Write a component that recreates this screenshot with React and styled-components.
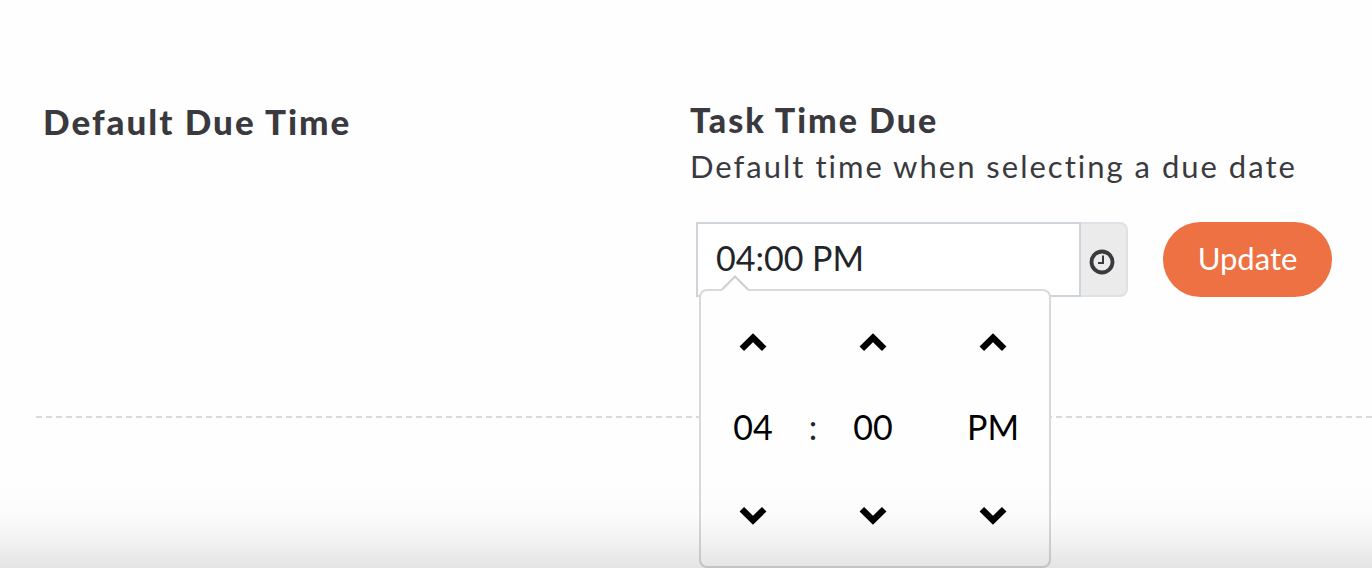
import React, { useState } from "react";
import styled, { createGlobalStyle } from "styled-components";

const GlobalStyle = createGlobalStyle`
  *, *::before, *::after { box-sizing: border-box; }
  body {
    margin: 0;
    background: #fefefe;
    color: #3a3a3e;
    font-family: Lato, "Open Sans", sans-serif;
  }
  button, input { font: inherit; }
`;

const Page = styled.main`
  min-height: 100vh;
  padding: 96px 0 0 36px;
`;

const Section = styled.section`
  display: grid;
  grid-template-columns: minmax(0, 1fr) minmax(0, 1fr);
  padding: 0 35px 121px 7px;
  background: repeating-linear-gradient(to right, #dadada 0 6px, transparent 6px 10px)
    left bottom / 100% 2px no-repeat;
`;

const SectionTitle = styled.h2`
  margin: 0;
  font-size: 35px;
  line-height: 50px;
  font-weight: 900;
  letter-spacing: 2px;
`;

const FieldLabel = styled.label`
  display: block;
  font-size: 34px;
  line-height: 48px;
  font-weight: 900;
  letter-spacing: 2px;
`;

const FieldHint = styled.p`
  margin: 0 0 34px;
  font-size: 31px;
  line-height: 44px;
  letter-spacing: 2px;
`;

const Controls = styled.div`
  display: flex;
  gap: 35px;
  padding: 0 5px 0 6px;
`;

const TimeField = styled.div`
  position: relative;
  display: flex;
  flex: 1;
  min-width: 0;
  height: 75px;
`;

const TimeInput = styled.input`
  flex: 1;
  min-width: 0;
  padding: 0 18px 4px;
  border: 2px solid #ced4da;
  border-radius: 0;
  background: #fff;
  color: #212529;
  font-size: 34px;
  outline: none;
`;

const ClockButton = styled.button`
  display: flex;
  align-items: center;
  justify-content: center;
  width: 47px;
  padding: 4px 4px 0 0;
  border: 2px solid #dee2e6;
  border-left: 0;
  border-radius: 0 8px 8px 0;
  background: #ebebeb;
  color: #3a3a3e;
`;

const UpdateButton = styled.button`
  width: 169px;
  height: 75px;
  padding: 0 0 4px;
  border: 0;
  border-radius: 38px;
  background: #ed7143;
  color: #fff;
  font-size: 31px;
`;

const Picker = styled.div`
  position: absolute;
  top: 67px;
  left: 3px;
  z-index: 1;
  display: grid;
  grid-template-columns: 104px 16px 104px 16px 104px;
  grid-auto-rows: 87px;
  align-items: center;
  justify-items: center;
  width: 352px;
  padding: 7px 0;
  border: 2px solid #d9d9d9;
  border-radius: 8px;
  background: #fefefe;

  &::before, &::after {
    content: "";
    position: absolute;
    border-style: solid;
    border-color: transparent;
    border-top: 0;
  }
  &::before {
    top: -16px;
    left: 20px;
    border-width: 0 14px 14px;
    border-bottom-color: #cfcfcf;
  }
  &::after {
    top: -13px;
    left: 21px;
    border-width: 0 13px 13px;
    border-bottom-color: #fefefe;
  }
`;

const StepButton = styled.button`
  display: flex;
  grid-column: ${(p) => p.$column};
  padding: 20px;
  border: 0;
  background: none;
  color: #000;
`;

const ValueButton = styled.button`
  grid-column: ${(p) => p.$column};
  padding: 0 0 4px;
  border: 0;
  background: none;
  color: #000;
  font-size: 34px;
`;

const Separator = styled.span`
  grid-column: 2;
  padding-bottom: 4px;
  color: #212529;
  font-size: 34px;
`;

const BottomFade = styled.div`
  position: fixed;
  right: 0;
  bottom: 0;
  left: 0;
  z-index: 2;
  height: 84px;
  background: linear-gradient(
    to bottom,
    rgba(0, 0, 0, 0),
    rgba(0, 0, 0, 0.01) 38%,
    rgba(0, 0, 0, 0.05) 70%,
    rgba(0, 0, 0, 0.1)
  );
  pointer-events: none;
`;

function Chevron({ down }) {
  return (
    <svg width="28" height="20" viewBox="0 0 28 20" fill="none" stroke="currentColor" strokeWidth="6.4" aria-hidden="true">
      <path d={down ? "M2.8 3.2 14 14.2 25.2 3.2" : "M2.8 16.8 14 5.8 25.2 16.8"} />
    </svg>
  );
}

function Clock() {
  return (
    <svg width="26" height="26" viewBox="0 0 26 26" fill="none" stroke="currentColor" aria-hidden="true">
      <circle cx="13" cy="13" r="10.5" strokeWidth="3.8" />
      <path d="M14 6.5V14H9" strokeWidth="2" />
    </svg>
  );
}

const pad = (n) => String(n).padStart(2, "0");

const units = [
  { name: "hour", column: 1 },
  { name: "minute", column: 3 },
  { name: "period", column: 5 },
];

export default function App() {
  const [minutes, setMinutes] = useState(16 * 60);
  const [open, setOpen] = useState(true);

  const hour24 = Math.floor(minutes / 60);
  const values = {
    hour: pad(hour24 % 12 || 12),
    minute: pad(minutes % 60),
    period: hour24 < 12 ? "AM" : "PM",
  };
  const amounts = { hour: 60, minute: 1, period: 720 };
  const step = (unit, direction) =>
    setMinutes((m) => (m + direction * amounts[unit] + 1440) % 1440);

  return (
    <>
      <GlobalStyle />
      <Page>
        <Section>
          <SectionTitle>Default Due Time</SectionTitle>
          <div>
            <FieldLabel htmlFor="due-time">Task Time Due</FieldLabel>
            <FieldHint id="due-hint">Default time when selecting a due date</FieldHint>
            <Controls>
              <TimeField>
                <TimeInput
                  id="due-time"
                  aria-describedby="due-hint"
                  readOnly
                  value={`${values.hour}:${values.minute} ${values.period}`}
                />
                <ClockButton type="button" aria-label="Choose time" onClick={() => setOpen(!open)}>
                  <Clock />
                </ClockButton>
                {open && (
                  <Picker>
                    {units.map((u) => (
                      <StepButton key={u.name} type="button" $column={u.column} aria-label={`Next ${u.name}`} onClick={() => step(u.name, 1)}>
                        <Chevron />
                      </StepButton>
                    ))}
                    <ValueButton type="button" $column={1}>{values.hour}</ValueButton>
                    <Separator>:</Separator>
                    <ValueButton type="button" $column={3}>{values.minute}</ValueButton>
                    <ValueButton type="button" $column={5}>{values.period}</ValueButton>
                    {units.map((u) => (
                      <StepButton key={u.name} type="button" $column={u.column} aria-label={`Previous ${u.name}`} onClick={() => step(u.name, -1)}>
                        <Chevron down />
                      </StepButton>
                    ))}
                  </Picker>
                )}
              </TimeField>
              <UpdateButton type="button">Update</UpdateButton>
            </Controls>
          </div>
        </Section>
      </Page>
      <BottomFade />
    </>
  );
}
